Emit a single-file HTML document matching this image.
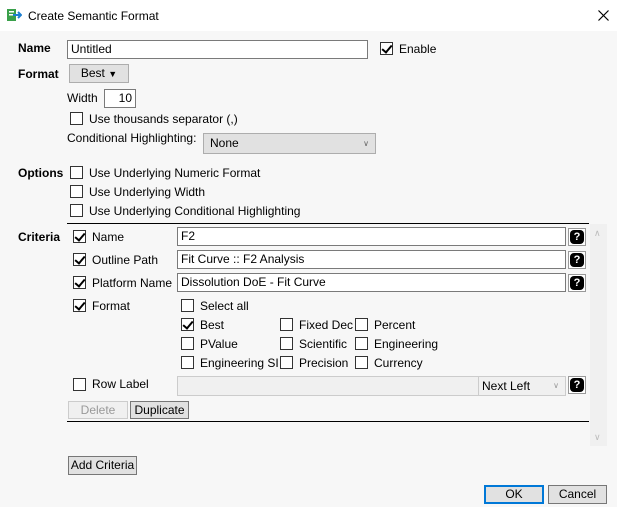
<!DOCTYPE html>
<html><head><style>
body{margin:0;width:617px;height:507px;background:#f7f7f7;font-family:"Liberation Sans",sans-serif;font-size:12px;color:#000;position:relative;overflow:hidden}
.a{position:absolute;white-space:nowrap}
.t{position:absolute;white-space:nowrap;line-height:14px}
.b{font-weight:bold}
.in{position:absolute;background:#fff;border:1px solid #7a7a7a;box-sizing:border-box;padding:1px 3px;line-height:14px}
.cb{position:absolute;width:13px;height:13px;border:1px solid #333;background:#fff;box-sizing:border-box}
.cb.c::after{content:"";position:absolute;left:3px;top:0px;width:4px;height:8px;border:solid #000;border-width:0 2px 2px 0;transform:rotate(40deg)}
.btn{position:absolute;background:#e1e1e1;border:1px solid #adadad;box-sizing:border-box;text-align:center;line-height:16px}
.hp{position:absolute;width:18px;height:18px;background:#fff;border:1px solid #999;box-sizing:border-box}
.hp::after{content:"?";position:absolute;left:1px;top:1px;width:14px;height:14px;border-radius:4px;background:#000;color:#fff;font-weight:bold;font-size:11px;line-height:14px;text-align:center}
</style></head><body>
<div class="a" style="left:0;top:0;width:617px;height:31px;background:#fff"></div>
<svg class="a" style="left:7px;top:8px" width="15" height="14"><rect x="0" y="1" width="9" height="12" fill="#3aa04a"/><rect x="2" y="3" width="5" height="1.5" fill="#fff"/><rect x="2" y="6" width="5" height="1.5" fill="#fff"/><path d="M6 7 L14 7 M11 4 L14 7 L11 10" stroke="#1e7fd0" stroke-width="2" fill="none"/></svg>
<div class="t" style="left:28px;top:9px">Create Semantic Format</div>
<svg class="a" style="left:598px;top:10px" width="11" height="11"><path d="M0.5 0.5L10.5 10.5M10.5 0.5L0.5 10.5" stroke="#000" stroke-width="1.2"/></svg>

<div class="t b" style="left:18px;top:41px">Name</div>
<div class="in" style="left:67px;top:40px;width:301px;height:19px">Untitled</div>
<div class="cb c" style="left:380px;top:42px"></div>
<div class="t" style="left:399px;top:42px">Enable</div>

<div class="t b" style="left:18px;top:67px">Format</div>
<div class="btn" style="left:69px;top:64px;width:60px;height:19px">Best <span style="font-size:9px">▼</span></div>
<div class="t" style="left:67px;top:91px">Width</div>
<div class="in" style="left:104px;top:89px;width:32px;height:19px;text-align:right">10</div>
<div class="cb" style="left:70px;top:112px"></div>
<div class="t" style="left:89px;top:112px">Use thousands separator (,)</div>
<div class="t" style="left:67px;top:131px">Conditional Highlighting:</div>
<div class="btn" style="left:203px;top:133px;width:173px;height:21px;text-align:left;padding-left:6px;line-height:19px">None<span style="position:absolute;right:6px;font-size:8px;color:#666">∨</span></div>

<div class="t b" style="left:18px;top:166px">Options</div>
<div class="cb" style="left:70px;top:166px"></div><div class="t" style="left:89px;top:166px">Use Underlying Numeric Format</div>
<div class="cb" style="left:70px;top:185px"></div><div class="t" style="left:89px;top:185px">Use Underlying Width</div>
<div class="cb" style="left:70px;top:204px"></div><div class="t" style="left:89px;top:204px">Use Underlying Conditional Highlighting</div>

<div class="a" style="left:67px;top:223px;width:522px;height:1px;background:#000"></div>
<div class="a" style="left:590px;top:224px;width:17px;height:222px;background:#f0f0f0"></div>
<div class="t" style="left:594px;top:226px;color:#bbb;font-size:9px">∧</div>
<div class="t" style="left:594px;top:430px;color:#bbb;font-size:9px">∨</div>

<div class="t b" style="left:18px;top:230px">Criteria</div>
<div class="cb c" style="left:73px;top:230px"></div><div class="t" style="left:92px;top:230px">Name</div>
<div class="in" style="left:177px;top:227px;width:389px;height:19px">F2</div><div class="hp" style="left:568px;top:228px"></div>
<div class="cb c" style="left:73px;top:253px"></div><div class="t" style="left:92px;top:253px">Outline Path</div>
<div class="in" style="left:177px;top:250px;width:389px;height:19px">Fit Curve :: F2 Analysis</div><div class="hp" style="left:568px;top:251px"></div>
<div class="cb c" style="left:73px;top:276px"></div><div class="t" style="left:92px;top:276px">Platform Name</div>
<div class="in" style="left:177px;top:273px;width:389px;height:19px">Dissolution DoE - Fit Curve</div><div class="hp" style="left:568px;top:274px"></div>
<div class="cb c" style="left:73px;top:299px"></div><div class="t" style="left:92px;top:299px">Format</div>

<div class="cb" style="left:181px;top:299px"></div><div class="t" style="left:200px;top:299px">Select all</div>
<div class="cb c" style="left:181px;top:318px"></div><div class="t" style="left:200px;top:318px">Best</div>
<div class="cb" style="left:280px;top:318px"></div><div class="t" style="left:299px;top:318px">Fixed Dec</div>
<div class="cb" style="left:355px;top:318px"></div><div class="t" style="left:374px;top:318px">Percent</div>
<div class="cb" style="left:181px;top:337px"></div><div class="t" style="left:200px;top:337px">PValue</div>
<div class="cb" style="left:280px;top:337px"></div><div class="t" style="left:299px;top:337px">Scientific</div>
<div class="cb" style="left:355px;top:337px"></div><div class="t" style="left:374px;top:337px">Engineering</div>
<div class="cb" style="left:181px;top:356px"></div><div class="t" style="left:200px;top:356px">Engineering SI</div>
<div class="cb" style="left:280px;top:356px"></div><div class="t" style="left:299px;top:356px">Precision</div>
<div class="cb" style="left:355px;top:356px"></div><div class="t" style="left:374px;top:356px">Currency</div>

<div class="cb" style="left:73px;top:378px"></div><div class="t" style="left:92px;top:377px">Row Label</div>
<div class="in" style="left:177px;top:376px;width:302px;height:20px;background:#f0f0f0;border-color:#ccc"></div>
<div class="in" style="left:478px;top:376px;width:88px;height:20px;background:#f0f0f0;border-color:#ccc;line-height:16px">Next Left<span style="position:absolute;right:6px;font-size:8px;color:#999">∨</span></div>
<div class="hp" style="left:568px;top:376px"></div>
<div class="btn" style="left:68px;top:401px;width:60px;height:18px;color:#999;background:#f0f0f0;border-color:#ccc">Delete</div>
<div class="btn" style="left:130px;top:401px;width:59px;height:18px;border-color:#777">Duplicate</div>
<div class="a" style="left:67px;top:421px;width:522px;height:1px;background:#000"></div>

<div class="btn" style="left:68px;top:456px;width:69px;height:19px;border-color:#777">Add Criteria</div>
<div class="btn" style="left:484px;top:485px;width:60px;height:19px;border:2px solid #0078d7;line-height:15px">OK</div>
<div class="btn" style="left:548px;top:485px;width:59px;height:19px;border-color:#777">Cancel</div>
</body></html>
